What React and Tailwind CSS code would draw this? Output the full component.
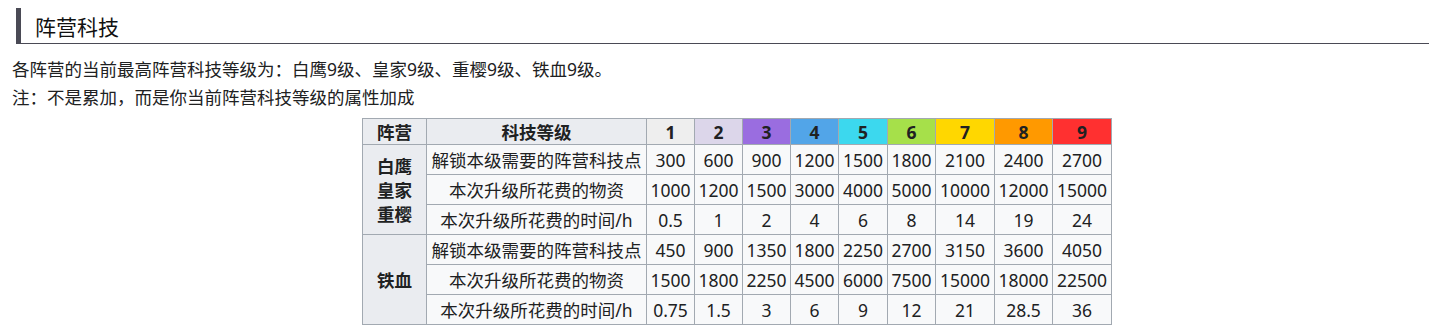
import React from 'react'

const levels = [
  { n: 1, bg: 'bg-[#eeeeee]' },
  { n: 2, bg: 'bg-[#dcd6ea]' },
  { n: 3, bg: 'bg-[#9a6de0]' },
  { n: 4, bg: 'bg-[#52a5e8]' },
  { n: 5, bg: 'bg-[#3cd8ee]' },
  { n: 6, bg: 'bg-[#a6e04a]' },
  { n: 7, bg: 'bg-[#ffd700]' },
  { n: 8, bg: 'bg-[#ff9900]' },
  { n: 9, bg: 'bg-[#ff3030]' },
]

const colWidths = ['w-[64px]', 'w-[220px]', 'w-[48px]', 'w-[48px]', 'w-[48px]', 'w-[48px]', 'w-[49px]', 'w-[48px]', 'w-[59px]', 'w-[58px]', 'w-[59px]']

const groups = [
  {
    name: ['白鹰', '皇家', '重樱'],
    rows: [
      ['解锁本级需要的阵营科技点', '300', '600', '900', '1200', '1500', '1800', '2100', '2400', '2700'],
      ['本次升级所花费的物资', '1000', '1200', '1500', '3000', '4000', '5000', '10000', '12000', '15000'],
      ['本次升级所花费的时间/h', '0.5', '1', '2', '4', '6', '8', '14', '19', '24'],
    ],
  },
  {
    name: ['铁血'],
    rows: [
      ['解锁本级需要的阵营科技点', '450', '900', '1350', '1800', '2250', '2700', '3150', '3600', '4050'],
      ['本次升级所花费的物资', '1500', '1800', '2250', '4500', '6000', '7500', '15000', '18000', '22500'],
      ['本次升级所花费的时间/h', '0.75', '1.5', '3', '6', '9', '12', '21', '28.5', '36'],
    ],
  },
]

const cell = 'border border-[#a2a9b1] p-0 text-center whitespace-nowrap'

export default function App() {
  return (
    <div
      className="bg-white text-[#202122] pl-3 pt-2 text-[17.5px] leading-[28px]"
      style={{ fontFamily: '"Noto Sans", "Noto Sans CJK SC", sans-serif' }}
    >
      {/* section heading */}
      <div className="ml-1 flex items-center h-[36px] pt-[4px] border-l-[5px] border-l-[#4a4a55] border-b border-b-[#4a4a55] pl-[14px]">
        <h2 className="text-[21px] leading-none text-[#111]">阵营科技</h2>
      </div>

      <p className="mt-[11px]">各阵营的当前最高阵营科技等级为：白鹰9级、皇家9级、重樱9级、铁血9级。</p>
      <p>注：不是累加，而是你当前阵营科技等级的属性加成</p>

      <table className="mt-[7px] ml-[350px] table-fixed border-collapse border border-[#a2a9b1] leading-[24px]">
        <colgroup>
          {colWidths.map((w, i) => (
            <col key={i} className={w} />
          ))}
        </colgroup>
        <thead>
          <tr className="h-[26px] font-bold">
            <th className={`${cell} bg-[#eaecf0]`}>阵营</th>
            <th className={`${cell} bg-[#eaecf0]`}>科技等级</th>
            {levels.map((l) => (
              <th key={l.n} className={`${cell} ${l.bg}`}>{l.n}</th>
            ))}
          </tr>
        </thead>
        <tbody>
          {groups.map((g) =>
            g.rows.map((r, ri) => (
              <tr key={g.name[0] + ri} className="h-[30px] bg-[#f8f9fa]">
                {ri === 0 && (
                  <th rowSpan={3} className={`${cell} bg-[#eaecf0] font-bold`}>
                    {g.name.map((n) => (
                      <div key={n}>{n}</div>
                    ))}
                  </th>
                )}
                {r.map((v, ci) => (
                  <td key={ci} className={cell}>{v}</td>
                ))}
              </tr>
            ))
          )}
        </tbody>
      </table>
    </div>
  )
}
